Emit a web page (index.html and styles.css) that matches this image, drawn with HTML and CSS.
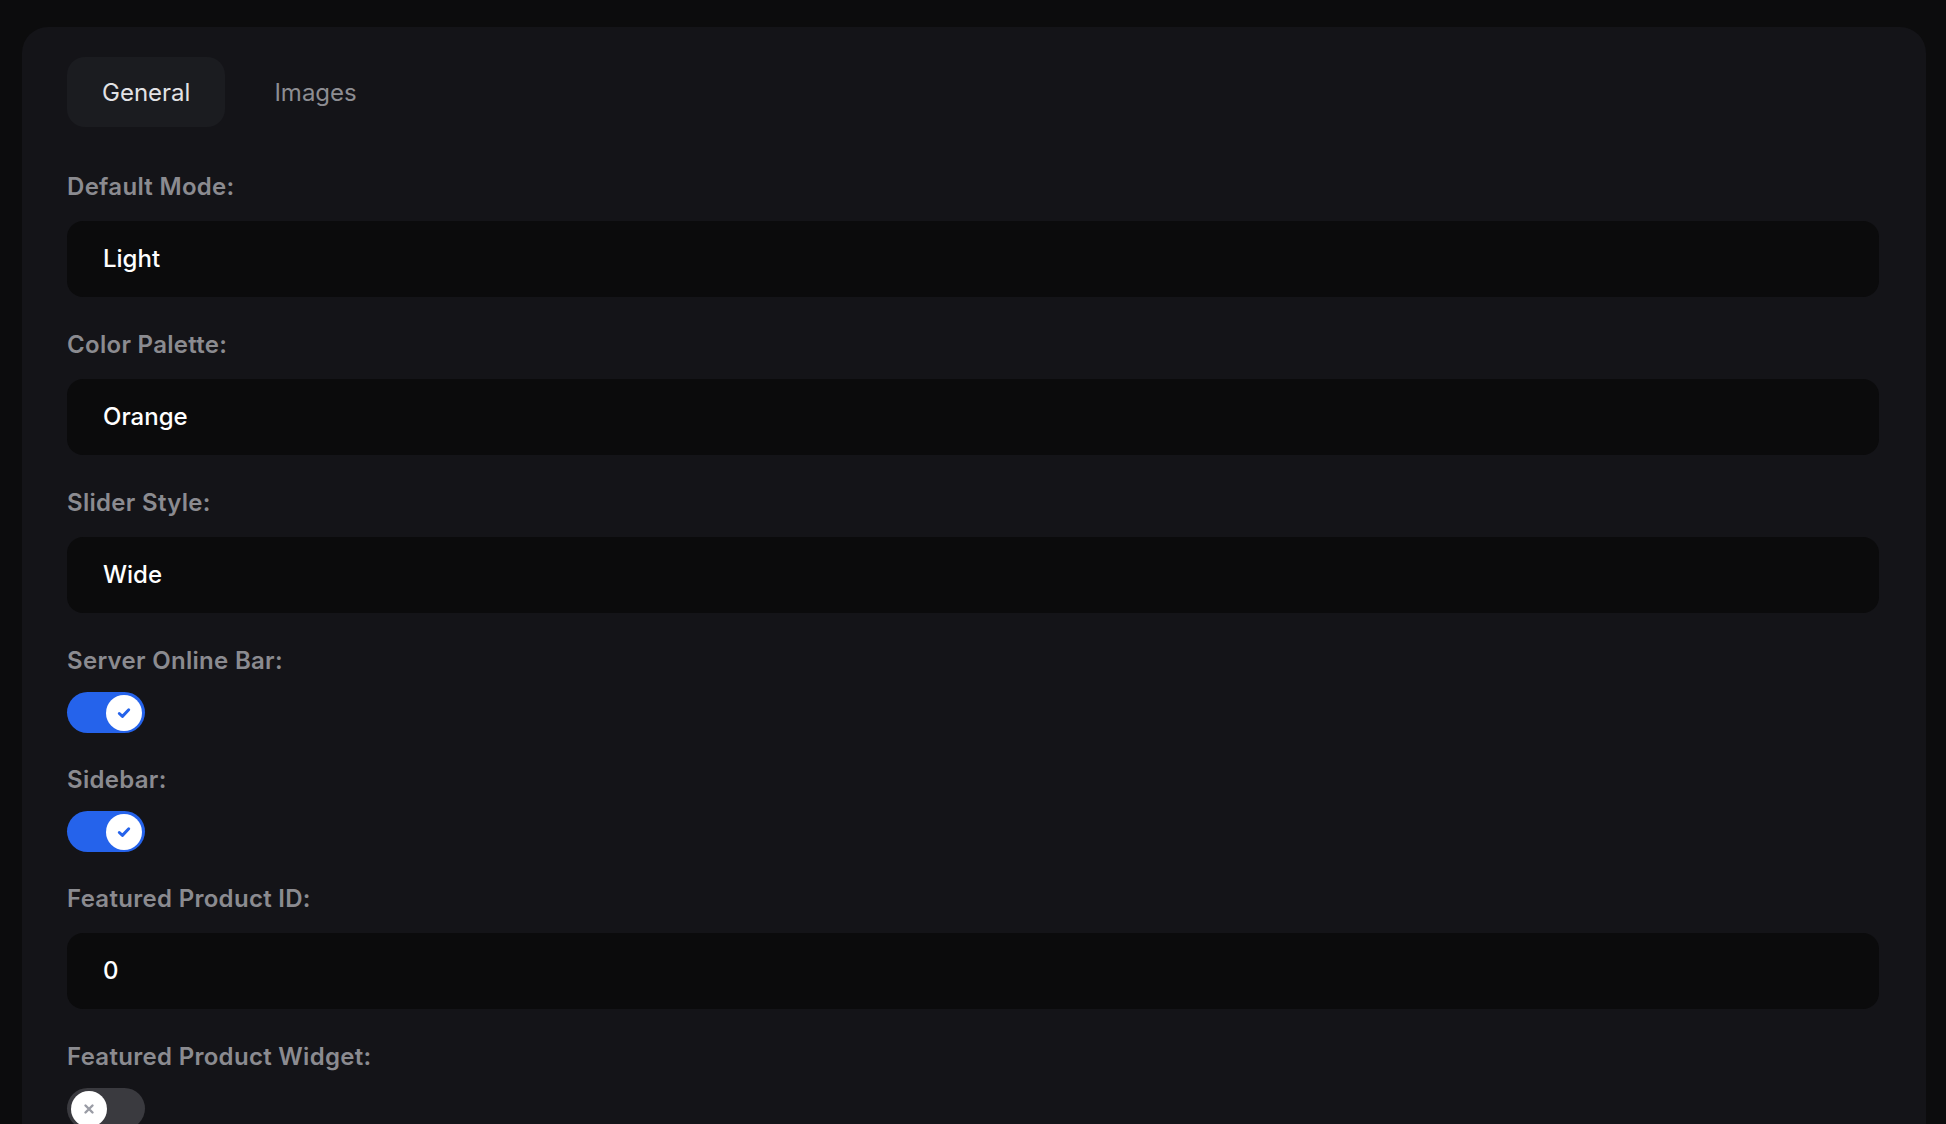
FILE: index.html
```html
<!DOCTYPE html>
<html lang="en">
<head>
<meta charset="utf-8">
<title>Settings</title>
<link rel="stylesheet" href="styles.css">
</head>
<body>
<div class="card">
  <div class="tabs">
    <div class="tab active">General</div>
    <div class="tab">Images</div>
  </div>

  <div class="field field-input">
    <label class="label">Default Mode:</label>
    <div class="input">Light</div>
  </div>

  <div class="field field-input">
    <label class="label">Color Palette:</label>
    <div class="input">Orange</div>
  </div>

  <div class="field field-input">
    <label class="label">Slider Style:</label>
    <div class="input">Wide</div>
  </div>

  <div class="field field-toggle">
    <label class="label">Server Online Bar:</label>
    <div class="toggle on">
      <span class="knob">
        <svg viewBox="0 0 16 16" width="18" height="18"><polyline points="3.8,8.4 6.6,11 12.2,5.2" fill="none" stroke="#2563eb" stroke-width="2.6" stroke-linecap="round" stroke-linejoin="round"/></svg>
      </span>
    </div>
  </div>

  <div class="field field-toggle">
    <label class="label">Sidebar:</label>
    <div class="toggle on">
      <span class="knob">
        <svg viewBox="0 0 16 16" width="18" height="18"><polyline points="3.8,8.4 6.6,11 12.2,5.2" fill="none" stroke="#2563eb" stroke-width="2.6" stroke-linecap="round" stroke-linejoin="round"/></svg>
      </span>
    </div>
  </div>

  <div class="field field-input">
    <label class="label">Featured Product ID:</label>
    <div class="input">0</div>
  </div>

  <div class="field field-toggle">
    <label class="label">Featured Product Widget:</label>
    <div class="toggle off">
      <span class="knob">
        <svg viewBox="0 0 16 16" width="14" height="14"><path d="M4 4 L12 12 M12 4 L4 12" fill="none" stroke="#9a9ca5" stroke-width="2.8" stroke-linecap="round"/></svg>
      </span>
    </div>
  </div>
</div>
</body>
</html>
```

FILE: styles.css
```css
* { box-sizing: border-box; }

html, body {
  margin: 0;
  background: #0c0c0d;
}

body {
  padding: 27px 20px 0 22px;
  font-family: Inter, "Noto Sans", "Liberation Sans", sans-serif;
  overflow: hidden;
  height: 1124px;
}

.card {
  background: #141418;
  border-radius: 26px;
  padding: 30px 47px 60px 45px;
  min-height: 1200px;
}

.tabs {
  display: flex;
  gap: 14px;
  margin-bottom: 44px;
}

.tab {
  height: 70px;
  padding: 0 35px;
  display: flex;
  align-items: center;
  font-size: 24px;
  font-weight: 400;
  color: #8d8d92;
  border-radius: 18px;
}

.tab.active {
  background: #1b1c20;
  color: #e2e2e5;
}

.label {
  display: block;
  font-size: 24px;
  line-height: 32px;
  font-weight: 600;
  letter-spacing: 0.3px;
  color: #8b8b90;
}

.field-input { margin-bottom: 32px; }
.field-toggle { margin-bottom: 31px; }

.input {
  margin-top: 18px;
  height: 76px;
  line-height: 76px;
  padding-left: 36px;
  background: #0b0b0c;
  border-radius: 16px;
  font-size: 24px;
  font-weight: 500;
  color: #ffffff;
}

.toggle {
  margin-top: 15px;
  width: 78px;
  height: 41px;
  border-radius: 21px;
  display: flex;
  align-items: center;
  padding: 0 3px;
}

.toggle.on {
  background: #2563eb;
  justify-content: flex-end;
}

.toggle.off {
  background: #3a3a3f;
  justify-content: flex-start;
  padding: 0 4px;
}

.knob {
  width: 36px;
  height: 36px;
  border-radius: 50%;
  background: #ffffff;
  display: flex;
  align-items: center;
  justify-content: center;
}
```
